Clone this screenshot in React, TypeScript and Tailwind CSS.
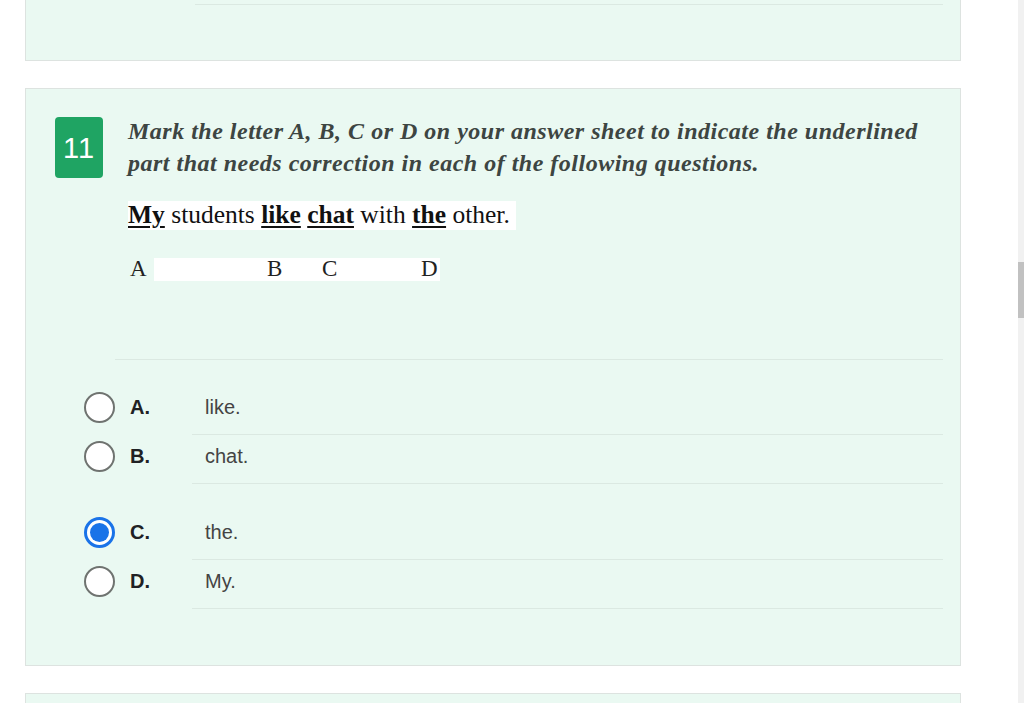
import React from "react";

const serif = { fontFamily: '"Liberation Serif", "Times New Roman", serif' };
const sans = { fontFamily: '"Liberation Sans", Arial, sans-serif' };

function Radio({ checked }: { checked?: boolean }) {
  if (checked) {
    return (
      <div className="w-[31px] h-[31px] rounded-full border-[3px] border-[#1a73e8] bg-white flex items-center justify-center">
        <div className="w-[19px] h-[19px] rounded-full bg-[#1a73e8]" />
      </div>
    );
  }
  return <div className="w-[31px] h-[31px] rounded-full border-2 border-[#6f7370] bg-white" />;
}

function Option({ letter, text, checked, extraTop }: { letter: string; text: string; checked?: boolean; extraTop?: string }) {
  return (
    <div className={`flex h-[49px] ${extraTop ?? ""}`}>
      <div className="w-[166px] flex items-start pt-[6px] pl-[58px]">
        <Radio checked={checked} />
        <span className="ml-[15px] leading-[31px] text-[20px] font-bold text-[#202124]" style={sans}>
          {letter}
        </span>
      </div>
      <div className="flex-1 border-b border-[#dbe9e2] pt-[6px] pl-[13px]">
        <span className="leading-[31px] text-[20px] text-[#444]" style={sans}>
          {text}
        </span>
      </div>
    </div>
  );
}

export default function App() {
  return (
    <div className="w-[1024px] h-[703px] overflow-hidden bg-white flex">
      <div className="flex-1 pl-[25px] pr-[57px]">
        {/* previous card (cut off) */}
        <div className="h-[61px] border border-t-0 border-[#dde3e0] bg-[#eaf9f2] pt-[4px] pl-[169px] pr-[17px]">
          <div className="border-t border-[#dbe9e2]" />
        </div>

        {/* question card */}
        <div className="mt-[27px] h-[578px] border border-[#dde3e0] bg-[#eaf9f2] pr-[17px]">
          <div className="flex pt-[28px] pl-[29px]">
            <div className="w-[48px] h-[61px] rounded-[4px] bg-[#1fa463] flex items-center justify-center pt-[3px] text-white text-[29px] tracking-[1px]" style={sans}>
              11
            </div>
            <div className="ml-[25px] -mt-[2px] flex-1 pr-[10px]">
              <p className="text-[24px] leading-[32px] font-bold italic tracking-[0.5px] text-[#3d4542]" style={serif}>
                Mark the letter A, B, C or D on your answer sheet to indicate the underlined part that needs correction in each of the following questions.
              </p>
              <div className="mt-[22px] flex">
                <div className="bg-white h-[29px] flex items-center text-[25.5px] text-[#111]" style={serif}>
                  <b className="underline underline-offset-[3px]">My</b>
                  <span>&nbsp;students&nbsp;</span>
                  <b className="underline underline-offset-[3px]">like</b>
                  <span>&nbsp;</span>
                  <b className="underline underline-offset-[3px]">chat</b>
                  <span>&nbsp;with&nbsp;</span>
                  <b className="underline underline-offset-[3px]">the</b>
                  <span>&nbsp;other.&nbsp;</span>
                </div>
              </div>
              <div className="mt-[28px] flex h-[23px] items-center text-[23px] text-[#222]" style={serif}>
                <span className="w-[26px] pl-[2px]">A</span>
                <div className="flex h-full items-center bg-white">
                  <span className="w-[113px]" />
                  <span className="w-[55px]">B</span>
                  <span className="w-[99px]">C</span>
                  <span className="pr-[2px]">D</span>
                </div>
              </div>
            </div>
          </div>

          <div className="mt-[78px] ml-[89px] border-t border-[#dbe9e2]" />

          <div className="mt-[26px]">
            <Option letter="A." text="like." />
            <Option letter="B." text="chat." />
            <Option letter="C." text="the." checked extraTop="mt-[27px]" />
            <Option letter="D." text="My." />
          </div>
        </div>

        {/* next card */}
        <div className="mt-[27px] h-[40px] border border-[#dde3e0] bg-[#eaf9f2]" />
      </div>

      {/* scrollbar */}
      <div className="w-[6px] bg-[#f1f1f1] pt-[262px]">
        <div className="h-[56px] bg-[#c1c1c1]" />
      </div>
    </div>
  );
}
